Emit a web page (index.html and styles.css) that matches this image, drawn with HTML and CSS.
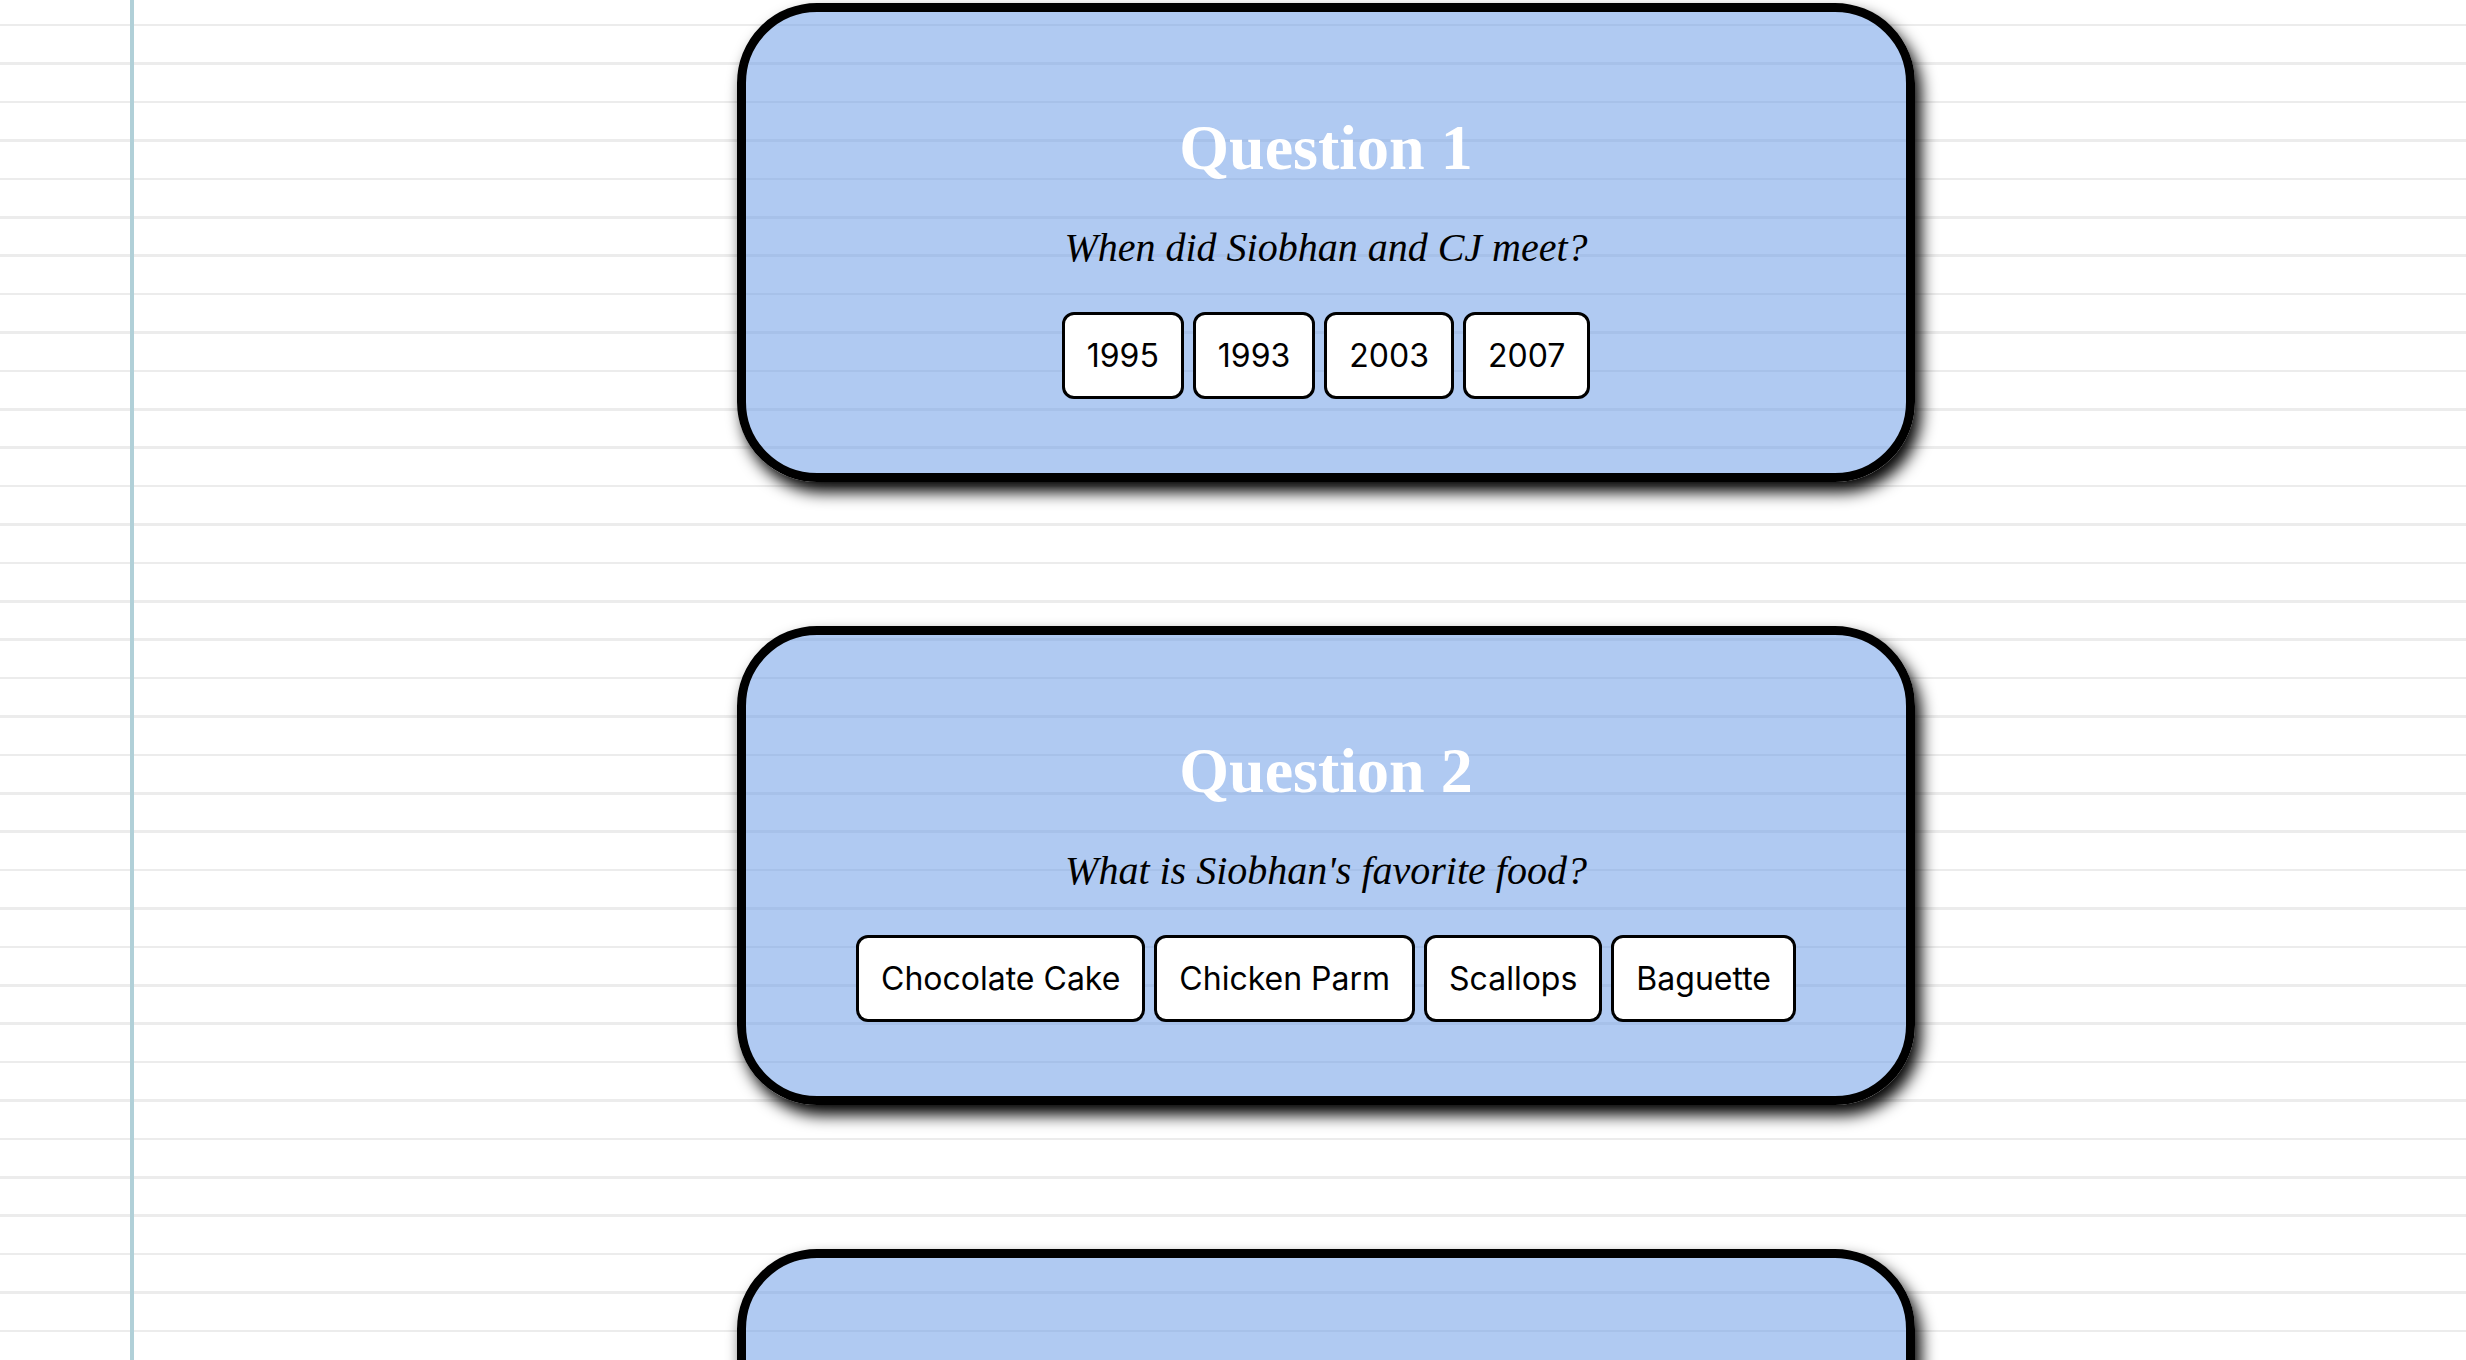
FILE: index.html
```html
<!DOCTYPE html>
<html lang="en">
<head>
    <meta charset="UTF-8">
    <meta name="viewport" content="width=device-width, initial-scale=1.0">
    <title>Siobhan Quiz</title>
    <link rel="stylesheet" href="styles.css">
</head>
<body>
    <main class="quiz">
        <section class="card">
            <h1 class="card-title">Question 1</h1>
            <p class="card-question">When did Siobhan and CJ meet?</p>
            <div class="answers">
                <button class="answer">1995</button>
                <button class="answer">1993</button>
                <button class="answer">2003</button>
                <button class="answer">2007</button>
            </div>
        </section>
        <section class="card">
            <h1 class="card-title">Question 2</h1>
            <p class="card-question">What is Siobhan's favorite food?</p>
            <div class="answers">
                <button class="answer">Chocolate Cake</button>
                <button class="answer">Chicken Parm</button>
                <button class="answer">Scallops</button>
                <button class="answer">Baguette</button>
            </div>
        </section>
        <section class="card">
            <h1 class="card-title">Question 3</h1>
            <p class="card-question">Where did Siobhan grow up?</p>
            <div class="answers">
                <button class="answer">Boston</button>
                <button class="answer">Chicago</button>
                <button class="answer">Dublin</button>
                <button class="answer">New York</button>
            </div>
        </section>
    </main>
</body>
</html>
```

FILE: styles.css
```css
html {
    background:
        linear-gradient(to right, transparent 130px, #b1d0d8 130px, #b1d0d8 134px, transparent 134px),
        repeating-linear-gradient(to bottom, #fff 0, #fff 24px, #ececec 24px, #ececec 26.5px, #fff 26.5px, #fff 38.4px);
}
body {
    margin: 0;
    font-family: "Liberation Serif", serif;
}
.quiz {
    display: flex;
    flex-direction: column;
    align-items: center;
    gap: 144px;
    padding: 3px 0 80px 186px;
}
.card {
    box-sizing: border-box;
    width: 1178px;
    padding: 99px 40px 74px;
    border: 9px solid #000;
    border-radius: 80px;
    background-color: rgba(97, 149, 229, 0.5);
    box-shadow: 6px 10px 16px #000;
    text-align: center;
}
.card-title {
    margin: 0;
    font-size: 64px;
    line-height: 74px;
    font-weight: bold;
    color: #fff;
}
.card-question {
    margin: 40px 0 0;
    font-size: 40px;
    line-height: 46px;
    font-style: italic;
    color: #000;
}
.answers {
    display: flex;
    justify-content: center;
    gap: 9px;
    margin-top: 41px;
}
.answer {
    font-family: Inter, "Liberation Sans", sans-serif;
    font-size: 32px;
    line-height: 41px;
    padding: 20px 22px;
    color: #000;
    background-color: #fff;
    border: 3px solid #000;
    border-radius: 12px;
}
```
